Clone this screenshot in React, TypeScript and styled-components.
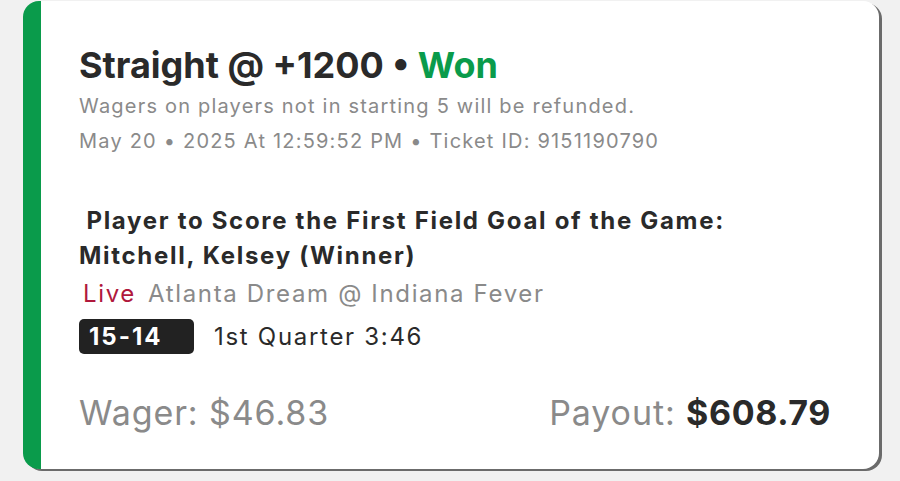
import styled, { createGlobalStyle } from "styled-components";

const Global = createGlobalStyle`
  html, body {
    margin: 0;
    padding: 0;
    background: #f1f1f1;
  }
  body {
    font-family: Inter, "Noto Sans", sans-serif;
  }
`;

const Page = styled.div`
  width: 900px;
  height: 481px;
  padding: 1px 0 0 23px;
  box-sizing: border-box;
`;

const Card = styled.div`
  width: 856px;
  height: 468px;
  box-sizing: border-box;
  background: #fff;
  border-radius: 16px;
  border-left: 18px solid #0a9b4b;
  box-shadow: 3px 2px 0 #6b6b6b;
  padding: 40px 48px 0 38px;
  display: flex;
  flex-direction: column;
  color: #2a2a2a;
`;

const Title = styled.h1`
  margin: 0;
  font-size: 36px;
  font-weight: 700;
  line-height: 48px;
  letter-spacing: 0;
`;

const Won = styled.span`
  color: #0a9b4b;
`;

const Meta = styled.div`
  font-size: 20px;
  color: #8a8a8a;
  line-height: 35px;
  letter-spacing: 1.2px;
`;

const Market = styled.div`
  margin-top: 44px;
  font-size: 24px;
  font-weight: 700;
  line-height: 35px;
  letter-spacing: 1.7px;
`;

const EventRow = styled.div`
  display: flex;
  gap: 12px;
  margin-top: 2px;
  font-size: 24px;
  line-height: 38px;
  color: #8a8a8a;
  letter-spacing: 1.65px;
  padding-left: 4px;
`;

const Live = styled.span`
  color: #b0183c;
`;

const ScoreRow = styled.div`
  display: flex;
  align-items: center;
  gap: 20px;
  margin-top: 6px;
  font-size: 24px;
  letter-spacing: 1.7px;
`;

const Score = styled.span`
  background: #222;
  color: #fff;
  font-weight: 700;
  border-radius: 5px;
  width: 115px;
  height: 35px;
  line-height: 35px;
  padding-left: 10px;
  letter-spacing: 2px;
  box-sizing: border-box;
`;

const Footer = styled.div`
  margin-top: 38px;
  display: flex;
  justify-content: space-between;
  align-items: baseline;
  font-size: 34px;
  color: #8a8a8a;
  letter-spacing: 0.9px;
`;

const Amount = styled.b`
  color: #2a2a2a;
  font-weight: 700;
  letter-spacing: 0.6px;
`;

export default function App() {
  return (
    <>
      <Global />
      <Page>
        <Card>
          <Title>
            Straight @ +1200 • <Won>Won</Won>
          </Title>
          <Meta>Wagers on players not in starting 5 will be refunded.</Meta>
          <Meta>May 20 • 2025 At 12:59:52 PM • Ticket ID: 9151190790</Meta>
          <Market>
            &nbsp;Player to Score the First Field Goal of the Game:
            <br />
            Mitchell, Kelsey (Winner)
          </Market>
          <EventRow>
            <Live>Live</Live>
            <span>Atlanta Dream @ Indiana Fever</span>
          </EventRow>
          <ScoreRow>
            <Score>15-14</Score>
            <span>1st Quarter 3:46</span>
          </ScoreRow>
          <Footer>
            <span>Wager: $46.83</span>
            <span>
              Payout: <Amount>$608.79</Amount>
            </span>
          </Footer>
        </Card>
      </Page>
    </>
  );
}
